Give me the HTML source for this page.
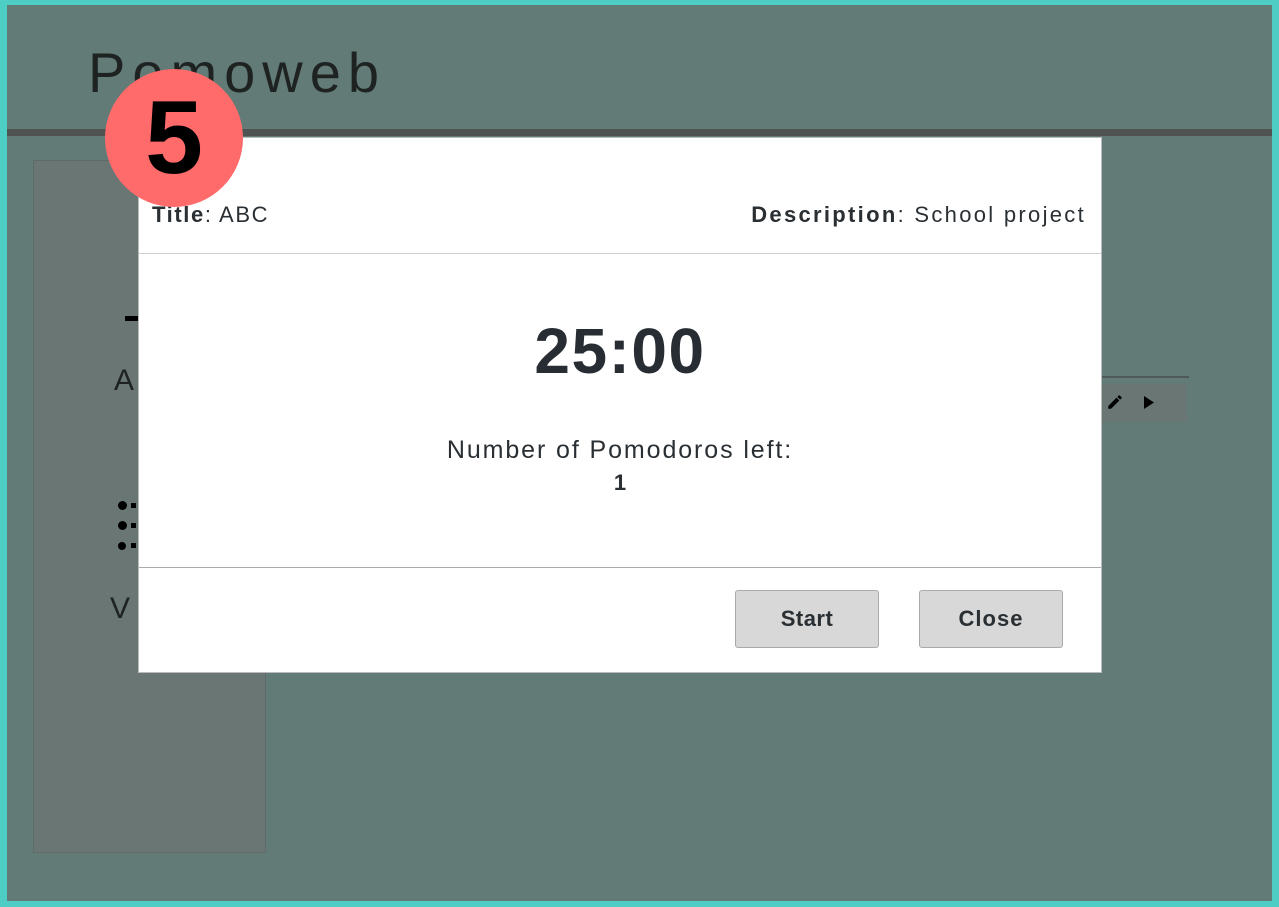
<!DOCTYPE html>
<html><head><style>
*{margin:0;padding:0;box-sizing:border-box}
body{width:1279px;height:907px;overflow:hidden;background:#4ecdc4;font-family:"Liberation Sans","DejaVu Sans",sans-serif;position:relative}
.bg{position:absolute;left:7px;top:5px;width:1265px;height:896px;background:#627b77}
.abs{position:absolute}
</style></head><body>
<div class="bg"></div>
<div class="abs" style="left:88px;top:40px;font-size:56px;color:#1e2322;letter-spacing:7px;font-weight:300">Pomoweb</div>
<div class="abs" style="left:7px;top:129px;width:1265px;height:7px;background:#4f5352"></div>
<div class="abs" style="left:33px;top:160px;width:233px;height:693px;background:#6a7674;border:1px solid #5f6b69"></div>
<div class="abs" style="left:125px;top:316px;width:14px;height:5px;background:#000"></div>
<div class="abs" style="left:114px;top:364px;font-size:30px;color:#1e2322">A</div>
<div class="abs" style="left:118px;top:497px;width:140px">
<div style="height:20px"><span style="display:inline-block;width:9px;height:9px;border-radius:50%;background:#000"></span><span style="display:inline-block;width:5px;height:5px;background:#000;margin-left:4px;vertical-align:2px"></span></div>
<div style="height:20px"><span style="display:inline-block;width:9px;height:9px;border-radius:50%;background:#000"></span><span style="display:inline-block;width:5px;height:5px;background:#000;margin-left:4px;vertical-align:2px"></span></div>
<div><span style="display:inline-block;width:8px;height:8px;border-radius:50%;background:#000"></span><span style="display:inline-block;width:5px;height:5px;background:#000;margin-left:5px;vertical-align:2px"></span></div>
</div>
<div class="abs" style="left:110px;top:592px;font-size:30px;color:#1e2322">V</div>
<div class="abs" style="left:1095px;top:376px;width:94px;height:2px;background:#4f5a58"></div>
<div class="abs" style="left:1100px;top:384px;width:87px;height:38px;background:#6a7674"></div>
<svg class="abs" style="left:1106px;top:393px" width="18" height="18" viewBox="0 0 24 24"><path d="M3 17.25V21h3.75L17.8 9.94l-3.75-3.75L3 17.25zM20.7 7.04a1 1 0 000-1.41l-2.34-2.34a1 1 0 00-1.41 0l-1.83 1.83 3.75 3.75 1.83-1.83z" fill="#000"/></svg>
<svg class="abs" style="left:1143px;top:396px" width="12" height="13" viewBox="0 0 12 13"><path d="M1 0L11 6.5L1 13Z" fill="#000"/></svg>
<div class="abs" style="left:138px;top:137px;width:964px;height:536px;background:#fff;border:1px solid #bbb">
<div class="abs" style="left:13px;top:64px;font-size:22px;color:#2a2f33;letter-spacing:1.6px"><b>Title</b>: ABC</div>
<div class="abs" style="right:15px;top:64px;font-size:22px;color:#2a2f33;letter-spacing:2.3px"><b>Description</b>: School project</div>
<div class="abs" style="left:0;top:115px;width:962px;height:1px;background:#d0d0d0"></div>
<div class="abs" style="left:0;top:176px;width:962px;text-align:center;font-size:64px;font-weight:bold;color:#272d33;letter-spacing:1.5px">25:00</div>
<div class="abs" style="left:0;top:298px;width:962px;text-align:center;font-size:25px;color:#2a2f33;letter-spacing:1.9px">Number of Pomodoros left:</div>
<div class="abs" style="left:0;top:332px;width:962px;text-align:center;font-size:22px;font-weight:bold;color:#2a2f33">1</div>
<div class="abs" style="left:0;top:429px;width:962px;height:1px;background:#aaa"></div>
<div class="abs" style="left:596px;top:452px;width:144px;height:58px;background:#d8d8d8;border:1px solid #aaa;border-radius:3px;text-align:center;line-height:56px;font-size:22px;font-weight:bold;color:#2a2f33;letter-spacing:.5px">Start</div>
<div class="abs" style="left:780px;top:452px;width:144px;height:58px;background:#d8d8d8;border:1px solid #aaa;border-radius:3px;text-align:center;line-height:56px;font-size:22px;font-weight:bold;color:#2a2f33;letter-spacing:1px">Close</div>
</div>
<div class="abs" style="left:105px;top:69px;width:138px;height:138px;border-radius:50%;background:#ff6b6b;text-align:center;line-height:138px;font-size:104px;font-weight:bold;color:#000">5</div>
</body></html>
